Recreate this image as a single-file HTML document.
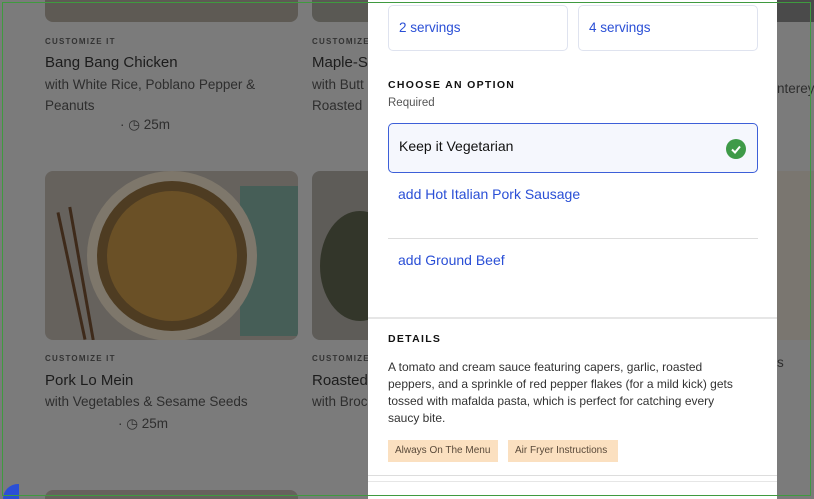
<!DOCTYPE html>
<html><head><style>
*{margin:0;padding:0;box-sizing:border-box}
html,body{width:814px;height:499px;overflow:hidden}
body{background:#7b7b7b;font-family:"Liberation Sans",sans-serif;position:relative}
.a{position:absolute}
.frame{position:absolute;left:2px;top:2px;width:809px;height:494px;border:1.5px solid #3f9a3f;z-index:10;pointer-events:none}
.k{font-size:8px;letter-spacing:1.2px;font-weight:bold;color:#333}
.t{font-size:15px;color:#1c1c1c}
.s{font-size:13.5px;color:#2e2e2e;line-height:21px}
.panel{position:absolute;left:368px;top:0;width:409px;height:499px;background:#fff;overflow:hidden}
.btn{position:absolute;top:5px;height:46px;border:1px solid #dfe3ef;border-radius:5px;color:#2a4fd6;font-size:13.5px;padding:14px 10px}
.blue{color:#2a4fd6;font-size:14px}
.tag{position:absolute;top:440px;height:22px;background:#fbe0c0;font-size:10px;color:#5a4a3a;padding:5px 7px;white-space:nowrap}
</style></head><body>
<div class="a" style="left:45px;top:0;width:253px;height:22px;background:#5e5a54;border-radius:0 0 8px 8px"></div>
<div class="a" style="left:312px;top:0;width:56px;height:22px;background:#5a5954;border-radius:0 0 0 8px"></div>
<div class="a k" style="left:45px;top:37px">CUSTOMIZE IT</div>
<div class="a t" style="left:45px;top:54px">Bang Bang Chicken</div>
<div class="a s" style="left:45px;top:74px">with White Rice, Poblano Pepper &amp;<br>Peanuts</div>
<div class="a s" style="left:120px;top:114px">· &#9719; 25m</div>
<div class="a k" style="left:312px;top:37px">CUSTOMIZE</div>
<div class="a t" style="left:312px;top:54px">Maple-S</div>
<div class="a s" style="left:312px;top:74px">with Butt<br>Roasted</div>
<div class="a" style="left:45px;top:171px;width:253px;height:169px;background:#66625d;border-radius:8px;overflow:hidden">
 <div class="a" style="left:195px;top:15px;width:70px;height:150px;background:#465e57"></div>
 <div class="a" style="left:42px;top:0;width:170px;height:170px;border-radius:50%;background:#7e776b"></div>
 <div class="a" style="left:52px;top:10px;width:150px;height:150px;border-radius:50%;background:#4e3c22"></div>
 <div class="a" style="left:62px;top:20px;width:130px;height:130px;border-radius:50%;background:#6a5026"></div>
 <div class="a" style="left:25px;top:40px;width:3px;height:130px;background:#3e2a1a;transform:rotate(-12deg)"></div>
 <div class="a" style="left:35px;top:35px;width:3px;height:135px;background:#3e2a1a;transform:rotate(-10deg)"></div>
</div>
<div class="a" style="left:312px;top:171px;width:56px;height:169px;background:#5e5c58;border-radius:8px 0 0 8px;overflow:hidden">
 <div class="a" style="left:8px;top:40px;width:80px;height:110px;border-radius:50%;background:#33362a"></div>
</div>
<div class="a k" style="left:45px;top:354px">CUSTOMIZE IT</div>
<div class="a t" style="left:45px;top:372px">Pork Lo Mein</div>
<div class="a s" style="left:45px;top:391px">with Vegetables &amp; Sesame Seeds</div>
<div class="a s" style="left:118px;top:413px">· &#9719; 25m</div>
<div class="a k" style="left:312px;top:354px">CUSTOMIZE</div>
<div class="a t" style="left:312px;top:372px">Roasted</div>
<div class="a s" style="left:312px;top:391px">with Broc</div>
<div class="a" style="left:3px;top:484px;width:16px;height:15px;border-radius:15px 0 0 0;background:#2a4fd6"></div>
<div class="a" style="left:45px;top:490px;width:253px;height:9px;background:#66625d;border-radius:8px 8px 0 0"></div>

<div class="a" style="left:777px;top:0;width:37px;height:22px;background:#4a4a4a"></div>
<div class="a s" style="left:777px;top:78px">nterey</div>
<div class="a" style="left:777px;top:171px;width:37px;height:169px;background:#7a7670"></div>
<div class="a s" style="left:777px;top:352px">s</div>

<div class="panel">
 <div class="btn" style="left:20px;width:180px">2 servings</div>
 <div class="btn" style="left:210px;width:180px">4 servings</div>
 <div class="a" style="left:20px;top:79px;font-size:10.5px;font-weight:bold;letter-spacing:1.3px;color:#111">CHOOSE AN OPTION</div>
 <div class="a" style="left:20px;top:97px;font-size:11.5px;color:#555">Required</div>
 <div class="a" style="left:20px;top:123px;width:370px;height:50px;border:1.5px solid #3d5fd8;border-radius:5px;background:#f5f7fd">
  <div class="a" style="left:10px;top:14px;font-size:14px;color:#111">Keep it Vegetarian</div>
  <div class="a" style="left:337px;top:15px;width:20px;height:20px;border-radius:50%;background:#3e9a48"><svg width="20" height="20"><path d="M6 10.5l3 3 5-6" stroke="#fff" stroke-width="2" fill="none"/></svg></div>
 </div>
 <div class="a blue" style="left:30px;top:186px">add Hot Italian Pork Sausage</div>
 <div class="a" style="left:20px;top:238px;width:370px;height:1px;background:#ddd"></div>
 <div class="a blue" style="left:30px;top:252px">add Ground Beef</div>
 <div class="a" style="left:0;top:317px;width:409px;height:2px;background:#e6e6e6"></div>
 <div class="a" style="left:20px;top:333px;font-size:10.5px;font-weight:bold;letter-spacing:1.3px;color:#111">DETAILS</div>
 <div class="a" style="left:20px;top:359px;width:345px;font-size:12px;line-height:17px;color:#333">A tomato and cream sauce featuring capers, garlic, roasted peppers, and a sprinkle of red pepper flakes (for a mild kick) gets tossed with mafalda pasta, which is perfect for catching every saucy bite.</div>
 <div class="tag" style="left:20px;width:110px">Always On The Menu</div>
 <div class="tag" style="left:140px;width:110px">Air Fryer Instructions</div>
 <div class="a" style="left:0;top:475px;width:409px;height:1px;background:#ddd"></div>
 <div class="a" style="left:0;top:481px;width:409px;height:1px;background:#e6e6e6"></div>
</div>
<div class="frame"></div>
</body></html>
